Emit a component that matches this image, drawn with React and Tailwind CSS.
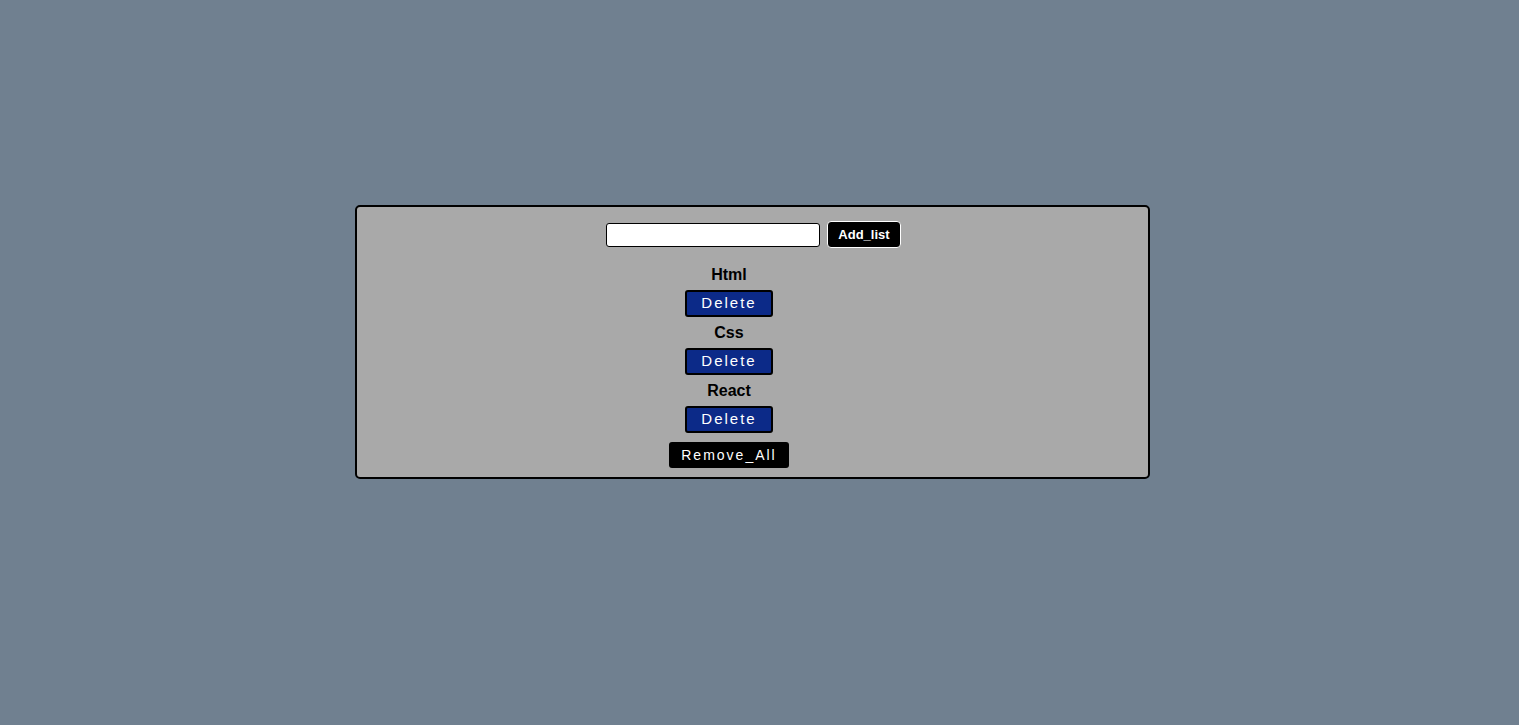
import { useState } from 'react';

export default function App() {
  const [items, setItems] = useState(['Html', 'Css', 'React']);
  const [text, setText] = useState('');

  const addItem = () => {
    if (!text.trim()) return;
    setItems([...items, text]);
    setText('');
  };

  return (
    <div className="min-h-screen w-full bg-[#708090] pt-[205px] pr-[14px] flex justify-center items-start font-['Liberation_Sans',Arial,sans-serif]">
      <div className="w-[795px] h-[274px] bg-[#a9a9a9] border-2 border-black rounded-[5px] flex flex-col items-center">
        <div className="flex items-center gap-[7px] mt-[14px] ml-[2px]">
          <input
            value={text}
            onChange={(e) => setText(e.target.value)}
            className="w-[214px] h-[24px] bg-white border border-black rounded-[3px] px-1 text-sm outline-none"
          />
          <button
            onClick={addItem}
            className="h-[27px] w-[74px] bg-black text-white border border-white rounded-[4px] text-[13px] font-bold"
          >
            Add_list
          </button>
        </div>

        <ul className="flex flex-col items-center mt-[18px] mr-[47px]">
          {items.map((item, i) => (
            <li key={i} className="flex flex-col items-center">
              <span className="text-[16px] leading-[18px] font-bold text-black">{item}</span>
              <button
                onClick={() => setItems(items.filter((_, j) => j !== i))}
                className="mt-[6px] mb-[7px] w-[88px] h-[27px] bg-[#0c2a88] border-2 border-black rounded-[3px] text-white text-[15px] tracking-[2px]"
              >
                Delete
              </button>
            </li>
          ))}
          <button
            onClick={() => setItems([])}
            className="mt-[2px] w-[120px] h-[26px] bg-black text-white rounded-[3px] text-[14px] tracking-[2px]"
          >
            Remove_All
          </button>
        </ul>
      </div>
    </div>
  );
}
